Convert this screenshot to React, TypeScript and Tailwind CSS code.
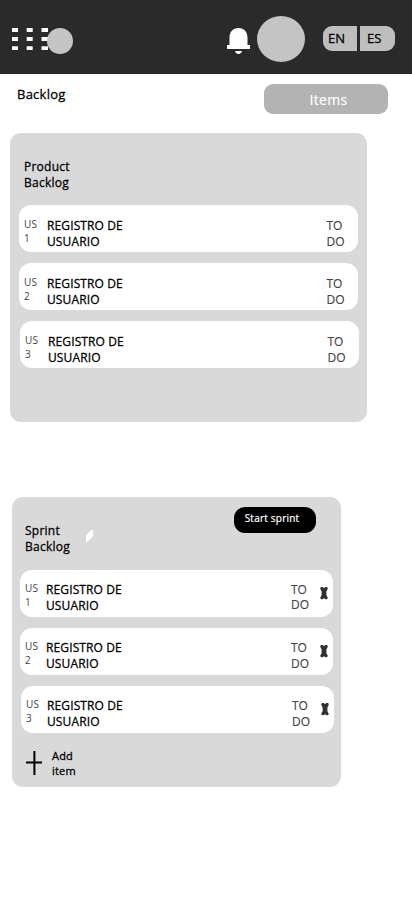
function Row({ n, sprint = false }: { n: number; sprint?: boolean }) {
  return (
    <div
      className={`flex h-[47px] shrink-0 items-start rounded-[12px] bg-white ${sprint ? "w-[313px]" : "w-[339px]"} ${n === 3 ? "ml-px" : ""}`}
    >
      <div className={`w-[23px] pl-[5px] text-[10px] leading-[14px] tracking-[0.3px] text-[#444444] ${sprint ? "pt-[11px]" : "pt-[12px]"}`}>
        <p>US</p>
        <p>{n}</p>
      </div>
      <p className={`w-[100px] text-[12px] leading-4 tracking-[0.12px] text-black [-webkit-text-stroke:0.28px_black] ${sprint ? "ml-[3px] pt-[12px]" : "ml-[5px] pt-[13px]"}`}>
        REGISTRO DE
        <br />
        USUARIO
      </p>
      <p className={`w-[22px] text-[12px] text-[#444444] [-webkit-text-stroke:0.15px_#444444] ${sprint ? "ml-[145px] pt-[12px]" : "ml-[179.500px] pt-[13px]"} ${sprint && n === 1 ? "leading-[15px]" : "leading-4"}`}>
        TO
        <br />
        DO
      </p>
      {sprint && (
        <svg className="ml-[7px] mt-[17px]" width="8" height="13" viewBox="0 0 8 13" fill="#303030">
          <path d="M.8 0h1.700L4 .9 5.500 0h1.700l.6 1.800L6.400 4.500v3.700l1.400 2.600-.7 1.400H5.500L4 11.300l-1.500.9H.9L.2 10.800 1.600 8.200V4.500L.2 1.800z" />
        </svg>
      )}
    </div>
  );
}

export default function App() {
  return (
    <main className="h-[917px] w-[412px] overflow-hidden bg-white font-['Open_Sans',sans-serif] text-black">
      <header className="flex h-[74px] items-start bg-[#2a2a2a]">
        <svg className="mt-7 shrink-0" width="73" height="28" viewBox="0 0 73 28">
          <g fill="#fef7ff">
            <path d="M12 0h6v4h-6zM26.700 0h6v4h-6zM41.500 0h6.500v4h-6.500zM12 9h6v4h-6zM26.700 9h6v4h-6zM41.500 9h6.500v4h-6.500zM12 18.300h6V22h-6zM26.700 18.300h6V22h-6zM41.500 18.300h6.500V22h-6.500z" />
          </g>
          <circle cx="60" cy="13" r="13" fill="#c4c4c4" />
        </svg>
        <svg className="ml-[154px] mt-7 shrink-0" width="23" height="26" viewBox="0 0 23 26" fill="white">
          <path d="M0 21v-4h2.500V9.500C2.500 4 6 0 11.500 0s9 4 9 9.500V17H23v4zM8 23h7c-.5 2-1.800 3-3.500 3S8.500 25 8 23z" />
        </svg>
        <div className="ml-[7px] mt-4 h-[46px] w-12 shrink-0 rounded-[50%] bg-[#c4c4c4]" />
        <div className="ml-[18px] mt-[26px] flex h-[25px] gap-[3px] text-[13px] leading-[24px] [-webkit-text-stroke:0.28px_black]">
          <span className="w-[34px] rounded-l-[9px] bg-[#bebebe] pl-[5px]">EN</span>
          <span className="w-[35px] rounded-r-[9px] bg-[#bebebe] pl-[7px]">ES</span>
        </div>
      </header>

      <div className="flex h-[59px] items-start justify-between pl-[17px] pr-6">
        <h1 className="mt-[10px] text-[13px] leading-5 tracking-[0.25px] [-webkit-text-stroke:0.28px_black]">Backlog</h1>
        <button className="mt-[10px] h-[30px] w-[124px] rounded-[9px] bg-[#b3b3b3] pl-[5px] text-[14px] leading-[31px] tracking-[0.3px] text-white [-webkit-text-stroke:0.2px_white]">
          Items
        </button>
      </div>

      <section className="ml-[10px] flex h-[289px] w-[357px] flex-col gap-[11px] rounded-[11px] bg-[#d9d9d9] pl-[9px]">
        <h2 className="h-[61.400px] shrink-0 pl-[5px] pt-[26px] text-[12px] leading-4 tracking-[0.25px] [-webkit-text-stroke:0.28px_black]">
          Product
          <br />
          Backlog
        </h2>
        <Row n={1} />
        <Row n={2} />
        <Row n={3} />
      </section>

      <section className="ml-3 mt-[75px] flex h-[290px] w-[329px] flex-col gap-[11px] rounded-[11px] bg-[#d9d9d9] pl-2">
        <div className="flex h-[62px] shrink-0 items-start">
          <h2 className="w-[66px] pl-[5px] pt-[26px] text-[12px] leading-4 tracking-[0.25px] [-webkit-text-stroke:0.28px_black]">
            Sprint
            <br />
            Backlog
          </h2>
          <svg className="mt-8" width="8" height="14" viewBox="0 0 8 14" fill="white">
            <path d="M0 6.500 5.300 1H7v6.500L1.500 12.500 0 14z" />
          </svg>
          <button className="ml-[140px] mt-[10px] h-[26px] w-[82px] rounded-[11px] bg-black pb-[4px] pr-[6px] text-[10px] leading-[22px] tracking-[0.22px] text-white [-webkit-text-stroke:0.22px_white]">
            Start sprint
          </button>
        </div>
        <Row n={1} sprint />
        <Row n={2} sprint />
        <Row n={3} sprint />
        <div className="flex items-start pl-[6px]">
          <svg className="mt-[7px]" width="16" height="24" viewBox="0 0 16 24" fill="none" stroke="black" strokeWidth="2">
            <path d="M0 11.500h16M8.400 0v24" />
          </svg>
          <p className="ml-[10px] mt-[4px] text-[11px] leading-[15px] tracking-[0.2px] [-webkit-text-stroke:0.28px_black]">
            Add
            <br />
            item
          </p>
        </div>
      </section>
    </main>
  );
}
